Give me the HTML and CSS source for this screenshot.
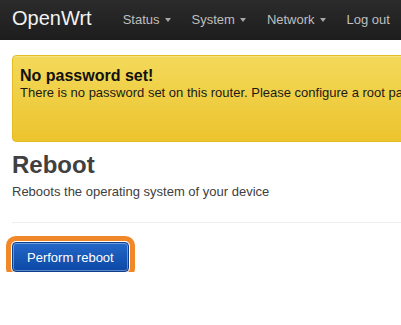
FILE: index.html
```html
<!DOCTYPE html>
<html lang="en">
<head>
    <meta charset="UTF-8">
    <meta name="viewport" content="width=device-width, initial-scale=1.0">
    <title>OpenWrt - Reboot</title>
    <link rel="stylesheet" href="styles.css">
</head>
<body>
    <!-- Top bar -->
    <header class="topbar">
        <a class="brand" href="#">OpenWrt</a>
        <ul class="nav">
            <li><a href="#" class="dropdown">Status<span class="caret"></span></a></li>
            <li><a href="#" class="dropdown">System<span class="caret"></span></a></li>
            <li><a href="#" class="dropdown">Network<span class="caret"></span></a></li>
            <li><a href="#">Log out</a></li>
        </ul>
    </header>

    <div class="container">
        <div class="alert-message warning">
            <h4>No password set!</h4>
            <p>There is no password set on this router. Please configure a root password to protect the web interface and enable SSH.</p>
        </div>

        <h2 class="page-title">Reboot</h2>
        <div class="page-desc">Reboots the operating system of your device</div>
        <hr>

        <button class="btn primary focused">Perform reboot</button>
    </div>
</body>
</html>
```

FILE: styles.css
```css
html {
    overflow: hidden;
}

body {
    margin: 0;
    font-family: "Liberation Sans", Arial, sans-serif;
    font-size: 13px;
    color: #404040;
    background: #fff;
}

.topbar {
    display: flex;
    width: 940px;
    height: 40px;
    padding: 0 12px;
    background: linear-gradient(#2b2b2b, #1d1d1d);
    white-space: nowrap;
}

.brand {
    flex-shrink: 0;
    font-size: 20px;
    line-height: 20px;
    padding: 8px 0 12px;
    color: #f2f2f2;
    text-decoration: none;
}

.nav {
    display: flex;
    flex-shrink: 0;
    list-style: none;
    margin: 0 0 0 31px;
    padding: 0;
    gap: 21px;
}

.nav li {
    flex-shrink: 0;
}

.nav a {
    display: block;
    padding: 10px 0 11px;
    line-height: 19px;
    color: #bfbfbf;
    text-decoration: none;
}

.caret {
    display: inline-block;
    width: 0;
    height: 0;
    margin-left: 5px;
    vertical-align: 2px;
    border-top: 4px solid #a8a8a8;
    border-left: 3.5px solid transparent;
    border-right: 3.5px solid transparent;
}

.container {
    width: 940px;
    padding: 0 12px;
}

.alert-message {
    margin-top: 15px;
    padding: 10px 7px 40px;
    border: 1px solid #e3bd22;
    border-radius: 4px;
    background: linear-gradient(#f3d95a, #ecc42e);
    box-shadow: inset 0 1px 0 rgba(255, 255, 255, 0.25);
    color: #1a1a1a;
}

.alert-message h4 {
    margin: 0;
    font-size: 16px;
    line-height: 19px;
    color: #111;
}

.alert-message p {
    margin: 0;
    line-height: 16px;
    white-space: nowrap;
}

.page-title {
    margin: 8px 0 0;
    font-size: 24px;
    line-height: 30px;
    color: #404040;
}

.page-desc {
    margin-top: 3px;
    line-height: 18px;
}

hr {
    margin: 21px 0 0;
    border: 0;
    border-top: 1px solid #eee;
}

.btn {
    margin: 19px 0 0;
    padding: 0 14px;
    height: 30px;
    font-family: inherit;
    font-size: 13px;
    color: #fff;
    border: 1px solid #0b3f8f;
    border-radius: 4px;
    cursor: pointer;
}

.btn.primary {
    background: linear-gradient(#2468c8, #0c48a6);
    box-shadow: inset 0 0 0 1px rgba(255, 255, 255, 0.35);
}

.btn.focused {
    box-shadow: inset 0 0 0 1px rgba(255, 255, 255, 0.35), 0 0 0 1px #fff, 0 0 0 6px #f0882a;
    outline: none;
}
```
